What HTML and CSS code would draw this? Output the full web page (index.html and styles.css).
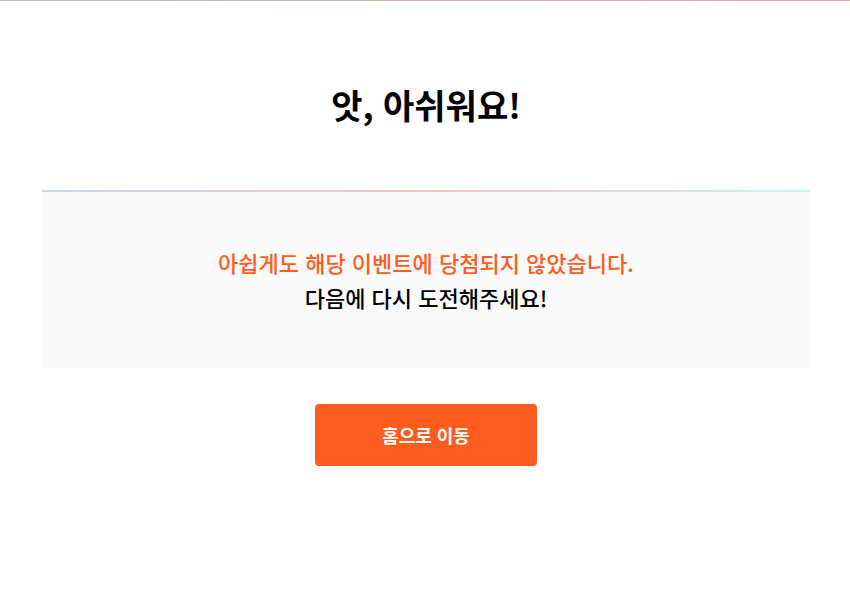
FILE: index.html
```html
<!DOCTYPE html>
<html lang="ko">
<head>
<meta charset="utf-8">
<title>앗, 아쉬워요!</title>
<link rel="stylesheet" href="styles.css">
</head>
<body>
<div class="topline"></div>
<main class="page">
  <h1 class="title">앗, 아쉬워요!</h1>
  <section class="result">
    <p class="msg msg-accent">아쉽게도 해당 이벤트에 당첨되지 않았습니다.</p>
    <p class="msg">다음에 다시 도전해주세요!</p>
  </section>
  <div class="actions">
    <a class="btn-home" href="#">홈으로 이동</a>
  </div>
</main>
</body>
</html>
```
FILE: styles.css
```css
html, body {
  margin: 0;
  padding: 0;
  background: #fff;
}
body {
  font-family: "Noto Sans CJK KR", "Noto Sans", sans-serif;
  color: #000;
}
.topline {
  height: 1px;
  background: linear-gradient(to right, #c8bcb8, #eba8a0);
}
.page {
  padding: 0 40px 0 42px;
}
.title {
  margin: 81px 0 0;
  font-size: 34px;
  line-height: 45px;
  font-weight: 700;
  text-align: center;
  color: #000;
}
.result {
  margin-top: 63px;
  border-top: 2px solid transparent;
  border-image: linear-gradient(to right, #cdd9f3 0%, #f2c2c0 50%, #ccf3f2 100%) 1;
  background: #fafafa;
  padding: 53px 0 53px;
  text-align: center;
}
.msg {
  margin: 0;
  font-size: 22px;
  line-height: 35px;
  font-weight: 500;
  color: #000;
}
.msg-accent {
  color: #ff5c22;
}
.actions {
  display: flex;
  justify-content: center;
  margin-top: 36px;
}
.btn-home {
  display: flex;
  align-items: center;
  justify-content: center;
  width: 222px;
  height: 62px;
  border-radius: 4px;
  background: #ff5c1f;
  color: #fff;
  font-size: 18px;
  font-weight: 700;
  text-decoration: none;
}
```
